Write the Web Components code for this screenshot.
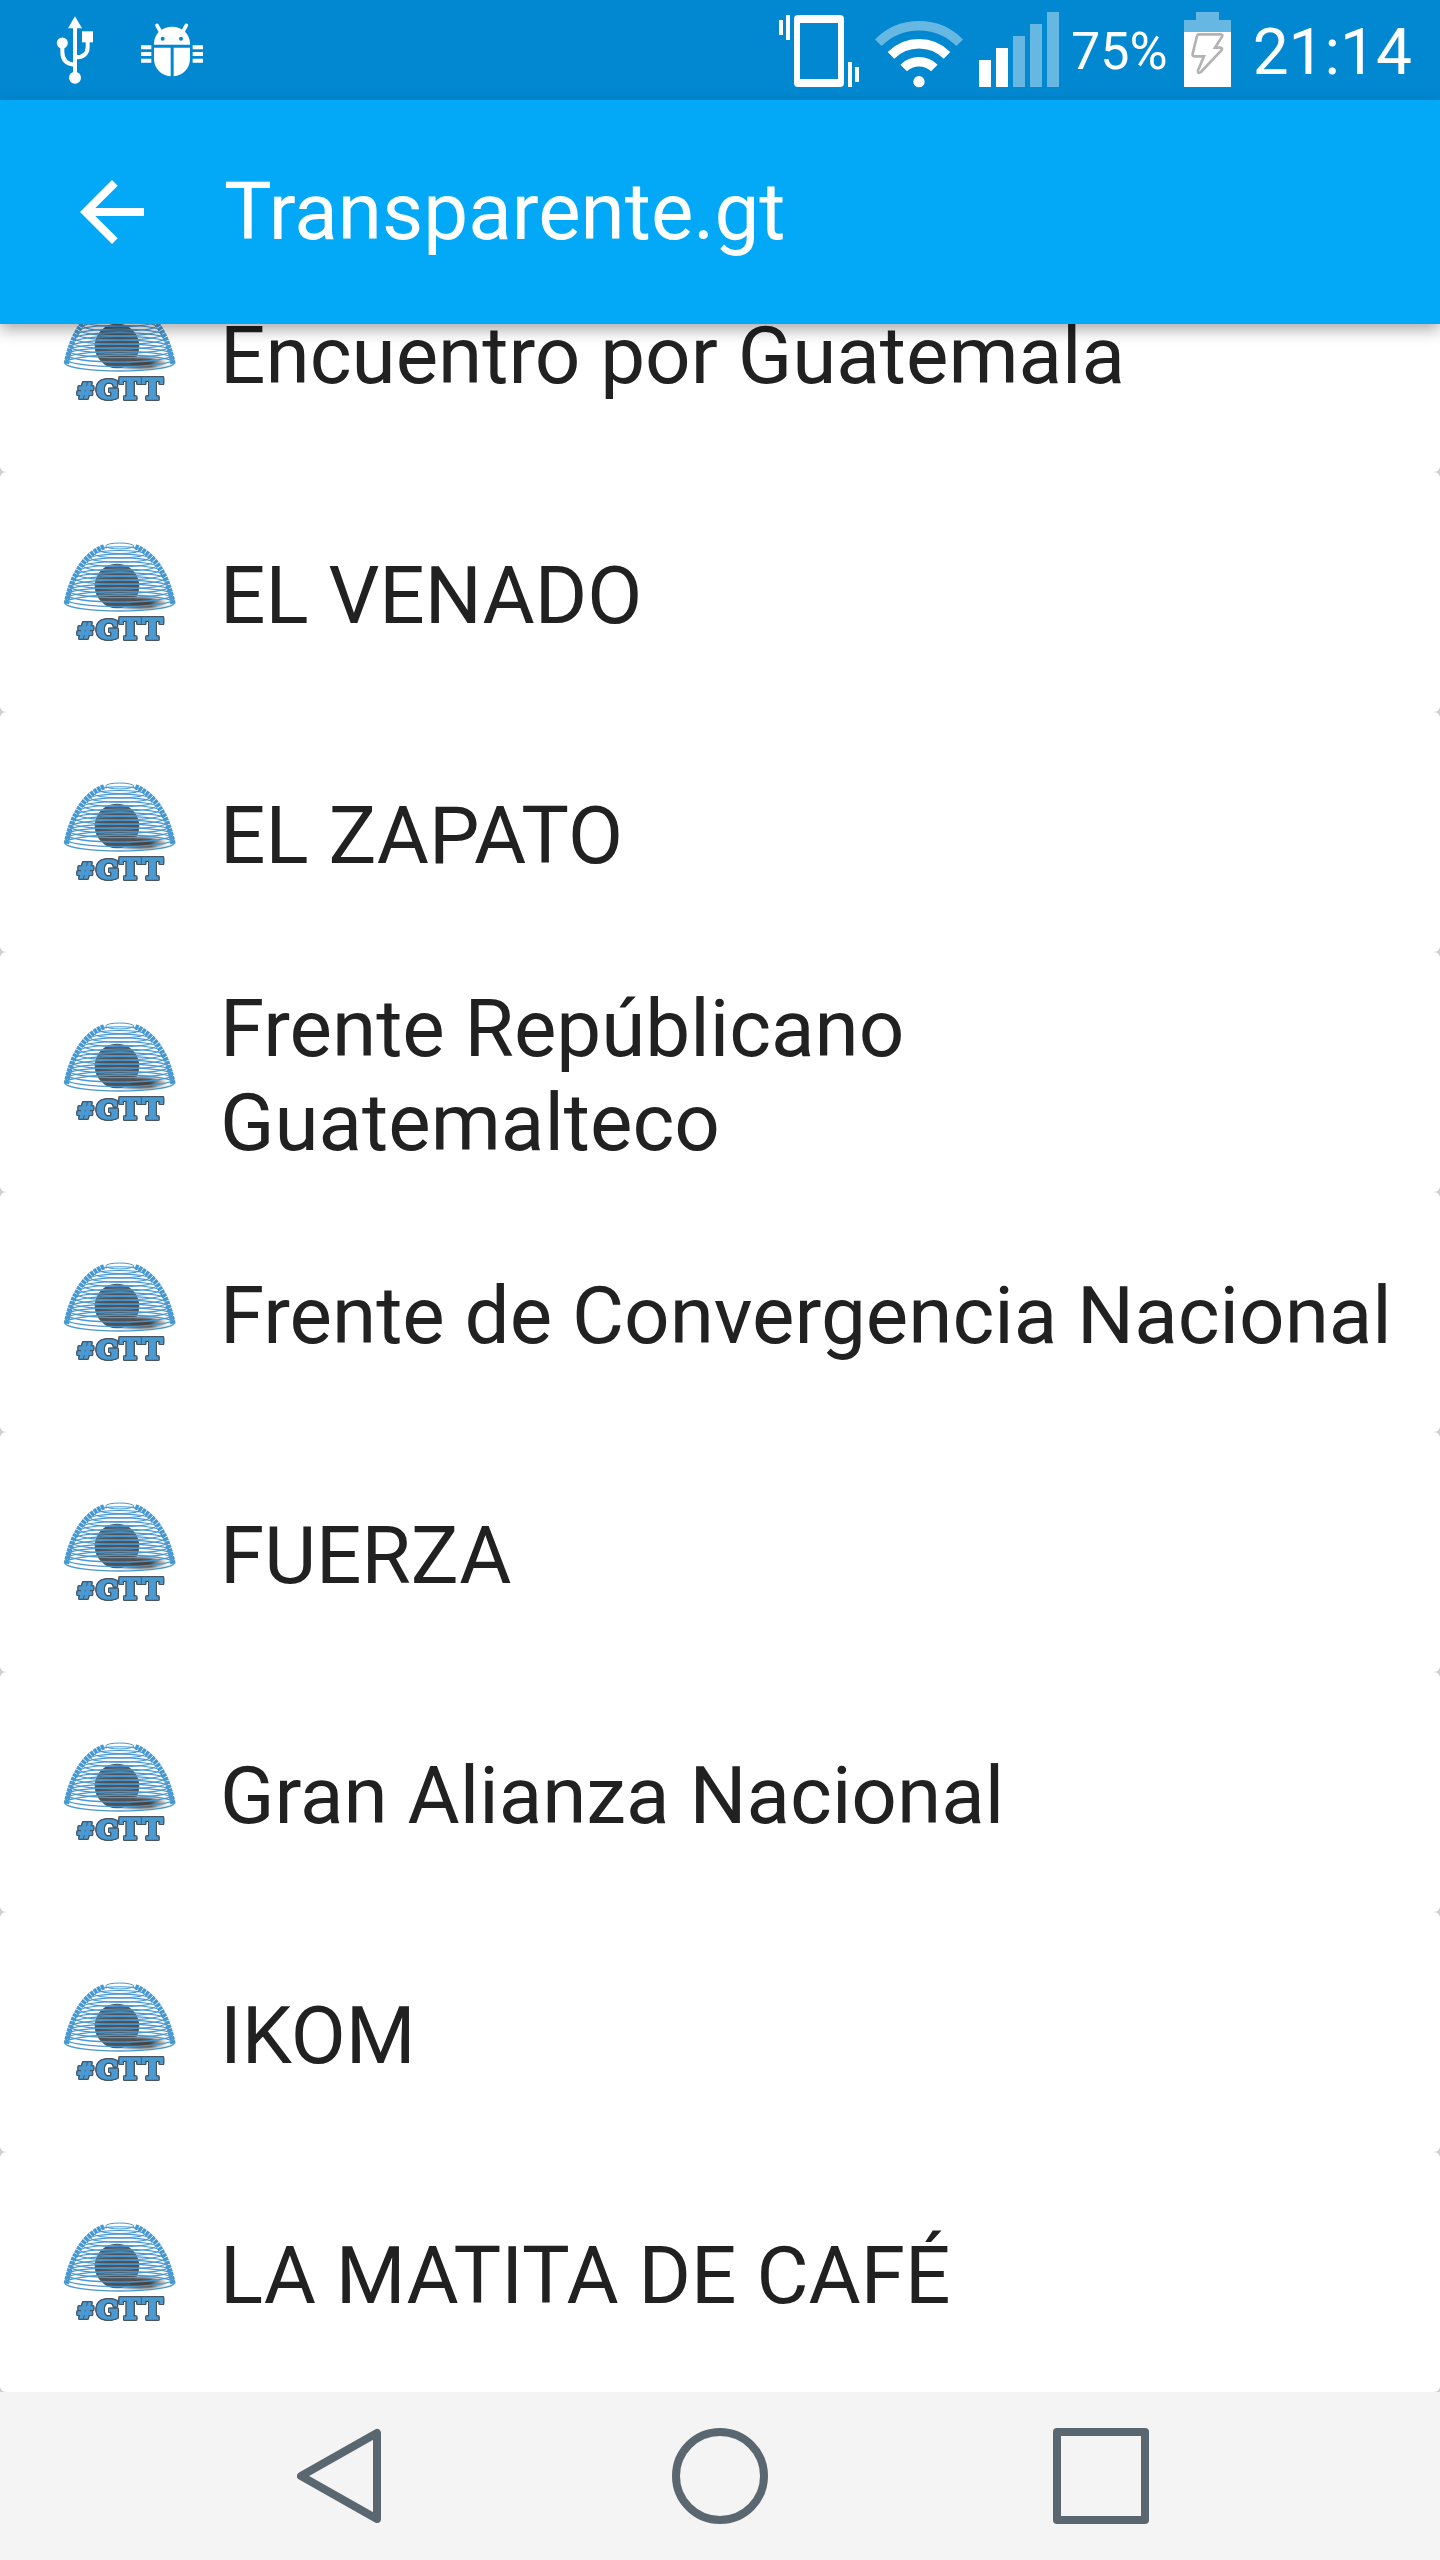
<!DOCTYPE html>
<html lang="es">
<head>
<meta charset="utf-8">
<meta name="viewport" content="width=device-width, initial-scale=1">
<title>Transparente.gt</title>
<style>
  html, body { margin: 0; height: 100%; }
  body { font-family: Roboto, "Noto Sans", sans-serif; background: #ddd; }
</style>
</head>
<body>
<party-app></party-app>

<template id="status-bar">
  <style>
    :host { display: flex; align-items: center; justify-content: space-between; height: 100px; padding: 0 28px 0 56px; background: #0288d1; color: #fff; }
    div { display: flex; align-items: center; }
    svg { display: block; }
    .left { gap: 46px; }
    .right { gap: 16px; }
    .percent { font-size: 52px; line-height: 64px; margin-left: -4px; padding-top: 4px; }
    .time { font-size: 64px; line-height: 76px; margin-left: 6px; padding-top: 6px; }
  </style>
  <div class="left">
    <svg width="38" height="68" viewBox="168 50 114 204" fill="#fff" role="img" aria-label="USB">
      <path d="M225 51L246 87H204Z"/><rect x="246" y="96" width="33" height="33"/>
      <circle cx="187" cy="131" r="16.500"/><circle cx="225" cy="235" r="18"/>
      <path d="M225 80V230M187 135V158Q187 194 225 196M263 120V142Q263 174 225 174" fill="none" stroke="#fff" stroke-width="12"/>
    </svg>
    <svg width="64" height="56" viewBox="421 64 192 168" fill="#fff" role="img" aria-label="Depuración USB">
      <path d="M463 132V128A54 50 0 0 1 571 128V132Z"/>
      <path d="M472 74L482 92M560 74L550 92" stroke="#fff" stroke-width="11" stroke-linecap="round"/>
      <circle cx="489" cy="114" r="6" fill="#0288d1"/><circle cx="544" cy="114" r="6" fill="#0288d1"/>
      <path d="M463 141H513V227C484 224 463 203 463 174ZM522 141H571V174C571 203 550 224 522 227Z"/>
      <path d="M424 134h31v12h-31zM424 154h31v12h-31zM424 174h31v12h-31zM579 134h31v12h-31zM579 154h31v12h-31zM579 174h31v12h-31z"/>
    </svg>
  </div>
  <div class="right">
    <svg width="80" height="76" viewBox="57 36 240 228" fill="#fff" role="img" aria-label="Vibración">
      <path fill-rule="evenodd" d="M114 45H240Q252 45 252 57V249Q252 261 240 261H114Q102 261 102 249V57Q102 45 114 45ZM120 69V237H234V69Z"/>
      <path d="M57 60h12v45H57zM78 45h12v75H78zM264 186h12v75h-12zM285 201h12v45h-12z"/>
    </svg>
    <svg width="88" height="76" viewBox="342 36 264 228" fill="none" stroke="#fff" stroke-width="28" role="img" aria-label="Wi-Fi">
      <path d="M352 128A172 172 0 0 1 596 128" opacity=".4"/>
      <path d="M390 166A119 119 0 0 1 558 166M428 204A66 66 0 0 1 520 204"/>
      <circle cx="474" cy="245" r="17" fill="#fff" stroke="none"/>
    </svg>
    <svg width="80" height="76" viewBox="654 36 240 228" fill="#fff" role="img" aria-label="Señal">
      <path d="M654 180h36v81h-36zM705 144h36v117h-36z"/>
      <path d="M756 108h36v153h-36zM807 72h36v189h-36zM858 36h36v225h-36z" opacity=".4"/>
    </svg>
    <span class="percent">75%</span>
    <svg width="47" height="76" viewBox="375 36 141 228" fill="#fff" role="img" aria-label="Batería cargando">
      <path d="M411 36H480V60H516V96H375V60H411Z" opacity=".4"/><path d="M375 96h141v165H375z"/>
      <path d="M419 103H484Q493 103 489 110L468 143H484Q492 145 487 151L426 216Q416 223 417 211L435 169H406Q399 169 401 161L414 108Q415 103 419 103Z" fill="none" stroke="#b3b3b3" stroke-width="8"/>
    </svg>
    <span class="time">21:14</span>
  </div>
</template>

<template id="app-bar">
  <style>
    :host { display: flex; align-items: center; gap: 64px; height: 224px; padding-left: 64px; box-sizing: border-box; background: #03a9f6; color: #fff; position: relative; z-index: 1; box-shadow: 0 6px 14px rgba(0,0,0,.32); }
    button { display: grid; place-items: center; width: 96px; height: 96px; padding: 0; border: 0; background: none; color: inherit; }
    h1 { margin: 0; font-size: 80px; line-height: 94px; font-weight: 400; }
  </style>
  <button type="button" aria-label="Atrás"><svg width="96" height="96" viewBox="0 0 24 24" fill="currentColor"><path d="M20 11H7.830l5.590-5.590L12 4l-8 8 8 8 1.410-1.410L7.830 13H20v-2z"/></svg></button>
  <h1><slot></slot></h1>
</template>

<template id="gtt-logo">
  <style>
    :host { display: block; width: 120px; height: 112px; flex: none; }
    svg { display: block; }
    .name { font-family: "DejaVu Serif", serif; font-weight: 700; fill: #4b9ad3; stroke: #4b9ad3; stroke-width: 5px; filter: drop-shadow(3px 0 0 #46545f) drop-shadow(-3px 0 0 #46545f) drop-shadow(0 3px 0 #46545f) drop-shadow(0 -3px 0 #46545f); }
  </style>
  <svg width="120" height="112" viewBox="60 46 360 336">
    <defs>
      <linearGradient id="shade"><stop offset="0" stop-color="#444"/><stop offset=".7" stop-color="#444"/><stop offset="1" stop-color="#777" stop-opacity=".3"/></linearGradient>
      <filter id="soft" x="-20%" y="-50%" width="140%" height="200%"><feGaussianBlur stdDeviation="4"/></filter>
    </defs>
    <ellipse cx="300" cy="247" rx="80" ry="17" fill="url(#shade)" filter="url(#soft)"/>
    <circle cx="231" cy="196" r="67" fill="#505256"/>
    <g class="rings" fill="none" stroke="#4798d2"></g>
    <g class="name">
      <text x="111" y="353" font-size="60">#</text>
      <text x="169" y="354" font-size="80">G</text>
      <text x="240" y="354" font-size="82">T</text>
      <text x="307" y="354" font-size="82">T</text>
    </g>
  </svg>
</template>

<template id="party-row">
  <style>
    :host { display: flex; align-items: center; gap: 40px; height: 240px; flex: none; padding: 0 40px 0 60px; box-sizing: border-box; border-radius: 6px; background: #fff; color: #212121; }
    span { padding-top: 8px; font-size: 80px; line-height: 94px; }
  </style>
  <gtt-logo></gtt-logo>
  <span><slot></slot></span>
</template>

<template id="nav-bar">
  <style>
    :host { display: flex; height: 168px; padding: 0 148px; box-sizing: border-box; background: #f4f4f4; }
    button { flex: 1; display: grid; place-items: center; padding: 0; border: 0; background: none; color: #5a6770; }
    svg { display: block; fill: none; stroke: currentColor; stroke-width: 8; stroke-linejoin: round; }
  </style>
  <button type="button" aria-label="Atrás"><svg width="84" height="96" viewBox="0 0 84 96"><path d="M80 5V91L4 48Z"/></svg></button>
  <button type="button" aria-label="Inicio"><svg width="96" height="96" viewBox="0 0 96 96"><circle cx="48" cy="48" r="44"/></svg></button>
  <button type="button" aria-label="Recientes"><svg width="96" height="96" viewBox="0 0 96 96"><path d="M4 4H92V92H4Z"/></svg></button>
</template>

<template id="party-app">
  <style>
    :host { display: flex; flex-direction: column; height: 100vh; }
    status-bar, app-bar, nav-bar { flex: none; }
    /* The list is scrolled to its end; earlier rows slide under the app bar. */
    main { flex: 1; min-height: 0; overflow: hidden; display: flex; flex-direction: column; justify-content: flex-end; background: #d0d0d0; }
  </style>
  <status-bar></status-bar>
  <app-bar>Transparente.gt</app-bar>
  <main role="list">
    <party-row>Encuentro por Guatemala</party-row>
    <party-row>EL VENADO</party-row>
    <party-row>EL ZAPATO</party-row>
    <party-row>Frente Repúblicano Guatemalteco</party-row>
    <party-row>Frente de Convergencia Nacional</party-row>
    <party-row>FUERZA</party-row>
    <party-row>Gran Alianza Nacional</party-row>
    <party-row>IKOM</party-row>
    <party-row>LA MATITA DE CAFÉ</party-row>
  </main>
  <nav-bar></nav-bar>
</template>

<script>
  class TemplateElement extends HTMLElement {
    constructor() {
      super();
      const template = document.getElementById(this.localName);
      this.attachShadow({ mode: "open" }).append(template.content.cloneNode(true));
    }
  }

  class GttLogo extends TemplateElement {
    constructor() {
      super();
      const group = this.shadowRoot.querySelector(".rings");
      const count = 15;
      for (let i = 0; i < count; i++) {
        const t = i / (count - 1);
        const ring = document.createElementNS("http://www.w3.org/2000/svg", "ellipse");
        ring.setAttribute("cx", 239);
        ring.setAttribute("cy", 76 + 171 * t);
        ring.setAttribute("rx", 42 + 122 * Math.pow(1 - Math.pow(1 - t, 1.5), 0.85));
        ring.setAttribute("ry", 9 + 15 * t);
        ring.setAttribute("stroke-width", 3 + t);
        group.append(ring);
      }
      // The coil is thickest where the rings turn at the sides.
      const edge = document.createElementNS("http://www.w3.org/2000/svg", "path");
      edge.setAttribute("d", "M192 78Q152 94 124 134Q92 180 79 249M286 78Q326 94 354 134Q386 180 399 249");
      edge.setAttribute("stroke-width", 16);
      edge.setAttribute("stroke-dasharray", "10 2");
      group.append(edge);
    }
  }

  class PartyRow extends TemplateElement {
    connectedCallback() { this.setAttribute("role", "listitem"); }
  }

  customElements.define("gtt-logo", GttLogo);
  customElements.define("party-row", PartyRow);
  for (const name of ["status-bar", "app-bar", "nav-bar", "party-app"]) {
    customElements.define(name, class extends TemplateElement {});
  }
</script>
</body>
</html>
